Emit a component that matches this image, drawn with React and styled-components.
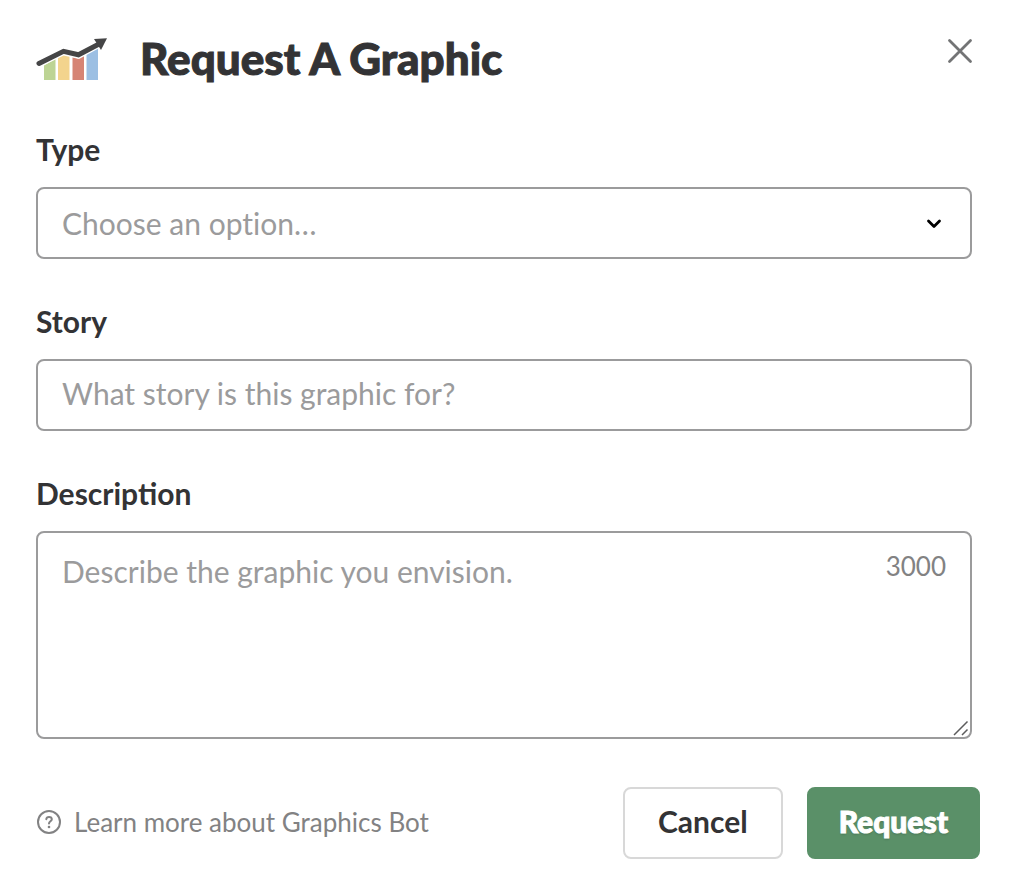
import React, { useState } from "react";
import styled, { createGlobalStyle, css } from "styled-components";

const GlobalStyle = createGlobalStyle`
  *, *::before, *::after { box-sizing: border-box; }
  body {
    margin: 0;
    background: #fff;
    color: #333335;
    font-family: Lato, "Liberation Sans", sans-serif;
  }
`;

const Dialog = styled.main`
  padding: 32px 40px 32px 36px;
`;

const Header = styled.header`
  display: flex;
  align-items: flex-start;
  margin-bottom: 49px;
`;

const Logo = styled.svg`
  flex: none;
  width: 72px;
  height: 44px;
  margin: 5px 32px 0 0;
`;

const heavy = css`
  font-weight: 900;
  -webkit-text-stroke: 1px currentColor;
`;

const Title = styled.h1`
  ${heavy}
  flex: 1;
  margin: 0;
  font-size: 44px;
  line-height: 52px;
`;

const CloseButton = styled.button`
  display: flex;
  padding: 6px;
  border: 0;
  background: none;
  color: #737475;
  cursor: pointer;
`;

const Fields = styled.div`
  display: flex;
  flex-direction: column;
  gap: 46px;
  margin-right: 8px;
`;

const Field = styled.div`
  display: flex;
  flex-direction: column;
  gap: 22px;
`;

const Label = styled.label`
  font-size: 30px;
  font-weight: 700;
  line-height: 32px;
`;

const ControlWrap = styled.div`
  position: relative;
  display: flex;
`;

const control = css`
  display: block;
  width: 100%;
  height: 72px;
  margin: 0;
  padding: 0 24px;
  border: 2px solid #9b9b9c;
  border-radius: 8px;
  background: #fff;
  color: #333335;
  font-family: inherit;
  font-size: 30px;
  line-height: 36px;
  &::placeholder { color: #9b9b9c; opacity: 1; }
`;

const Select = styled.select`
  ${control}
  appearance: none;
  color: ${(p) => (p.value ? "#333335" : "#9b9b9c")};
  font-variant-ligatures: none;
`;

const TextInput = styled.input`
  ${control}
  padding-bottom: 4px;
`;

const TextArea = styled.textarea`
  ${control}
  height: 208px;
  padding: 20px 120px 20px 24px;
  resize: vertical;
  &::-webkit-resizer { display: none; }
`;

const Chevron = styled.svg`
  position: absolute;
  top: 28px;
  right: 30px;
  pointer-events: none;
`;

const Counter = styled.span`
  position: absolute;
  top: 19px;
  right: 26px;
  color: #828283;
  font-size: 26px;
  line-height: 32px;
`;

const Grip = styled.svg`
  position: absolute;
  right: 2px;
  bottom: 2px;
  pointer-events: none;
`;

const Footer = styled.footer`
  display: flex;
  align-items: center;
  gap: 24px;
  margin-top: 48px;
`;

const HelpLink = styled.a`
  display: flex;
  align-items: center;
  gap: 12px;
  margin-right: auto;
  padding-bottom: 2px;
  color: #828283;
  font-size: 26px;
  line-height: 32px;
  text-decoration: none;
`;

const Button = styled.button`
  height: 72px;
  padding: 0 33px 4px;
  border: 2px solid #d8d8d8;
  border-radius: 8px;
  background: #fff;
  color: #333335;
  font-family: inherit;
  font-size: 30px;
  font-weight: 700;
  line-height: 36px;
  cursor: pointer;
  ${(p) =>
    p.$primary &&
    css`
      ${heavy}
      padding: 0 30px 4px;
      border-color: #5a9068;
      background: #5a9068;
      color: #fff;
      text-shadow: 0 2px 2px rgba(0, 0, 0, 0.12);
    `}
`;

const LIMIT = 3000;

export default function App() {
  const [type, setType] = useState("");
  const [description, setDescription] = useState("");

  return (
    <>
      <GlobalStyle />
      <Dialog aria-labelledby="dialog-title">
        <Header>
          <Logo viewBox="0 0 72 44" aria-hidden="true">
            <path d="M8 28.5 19.500 22V43H8Z" fill="#bdd494" />
            <path d="M22 20.500 28 17.500 33.500 19V43H22Z" fill="#f3d48d" />
            <path d="M36.500 20 42 21.500 48 18.500V43H36.500Z" fill="#d68475" />
            <path d="M50.500 17 62 11V43H50.500Z" fill="#9cbfe3" />
            <path d="M3 26.500 27.500 14.500 42.500 18 64 6.500" fill="none" stroke="#fff" strokeWidth="7.500" />
            <path d="M3 26.500 27.500 14.300 42.500 17.800 64 6.500" fill="none" stroke="#454546" strokeWidth="5" strokeLinecap="round" strokeLinejoin="miter" />
            <path d="M58 2 71 1.200 65 13Z" fill="#454546" />
          </Logo>
          <Title id="dialog-title">Request A Graphic</Title>
          <CloseButton type="button" aria-label="Close">
            <svg width="28" height="28" viewBox="0 0 28 28" fill="none" stroke="currentColor" strokeWidth="2.800" strokeLinecap="round">
              <path d="M3.500 2.500 24.500 23.500M24.500 2.500 3.500 23.500" />
            </svg>
          </CloseButton>
        </Header>

        <Fields>
          <Field>
            <Label htmlFor="type">Type</Label>
            <ControlWrap>
              <Select id="type" value={type} onChange={(e) => setType(e.target.value)}>
                <option value="">Choose an option…</option>
              </Select>
              <Chevron width="16" height="16" viewBox="0 0 16 16" fill="none" stroke="#000" strokeWidth="2.800" strokeLinecap="round" strokeLinejoin="round">
                <path d="M2.500 6 8 11.500 13.500 6" />
              </Chevron>
            </ControlWrap>
          </Field>
          <Field>
            <Label htmlFor="story">Story</Label>
            <TextInput id="story" type="text" placeholder="What story is this graphic for?" />
          </Field>
          <Field>
            <Label htmlFor="description">Description</Label>
            <ControlWrap>
              <TextArea
                id="description"
                maxLength={LIMIT}
                value={description}
                onChange={(e) => setDescription(e.target.value)}
                placeholder="Describe the graphic you envision."
              />
              <Counter>{LIMIT - description.length}</Counter>
              <Grip width="18" height="18" viewBox="0 0 18 18" fill="none" stroke="#5c5c5d" strokeWidth="1.500">
                <path d="M2 16 15.500 2.500M10 16 15.500 10.500" />
              </Grip>
            </ControlWrap>
          </Field>
        </Fields>

        <Footer>
          <HelpLink href="#help">
            <svg width="26" height="26" viewBox="0 0 26 26" fill="none" stroke="currentColor" strokeWidth="2" strokeLinecap="round" strokeLinejoin="round" aria-hidden="true">
              <circle cx="13" cy="13" r="11" />
              <path d="M10.300 10.200C10.500 8.600 11.600 7.900 13 7.900C14.600 7.900 15.800 8.900 15.800 10.300C15.800 12.300 13 12.400 13 14.600" />
              <circle cx="13" cy="18" r="1.300" fill="currentColor" stroke="none" />
            </svg>
            Learn more about Graphics Bot
          </HelpLink>
          <Button type="button">Cancel</Button>
          <Button type="submit" $primary>Request</Button>
        </Footer>
      </Dialog>
    </>
  );
}
